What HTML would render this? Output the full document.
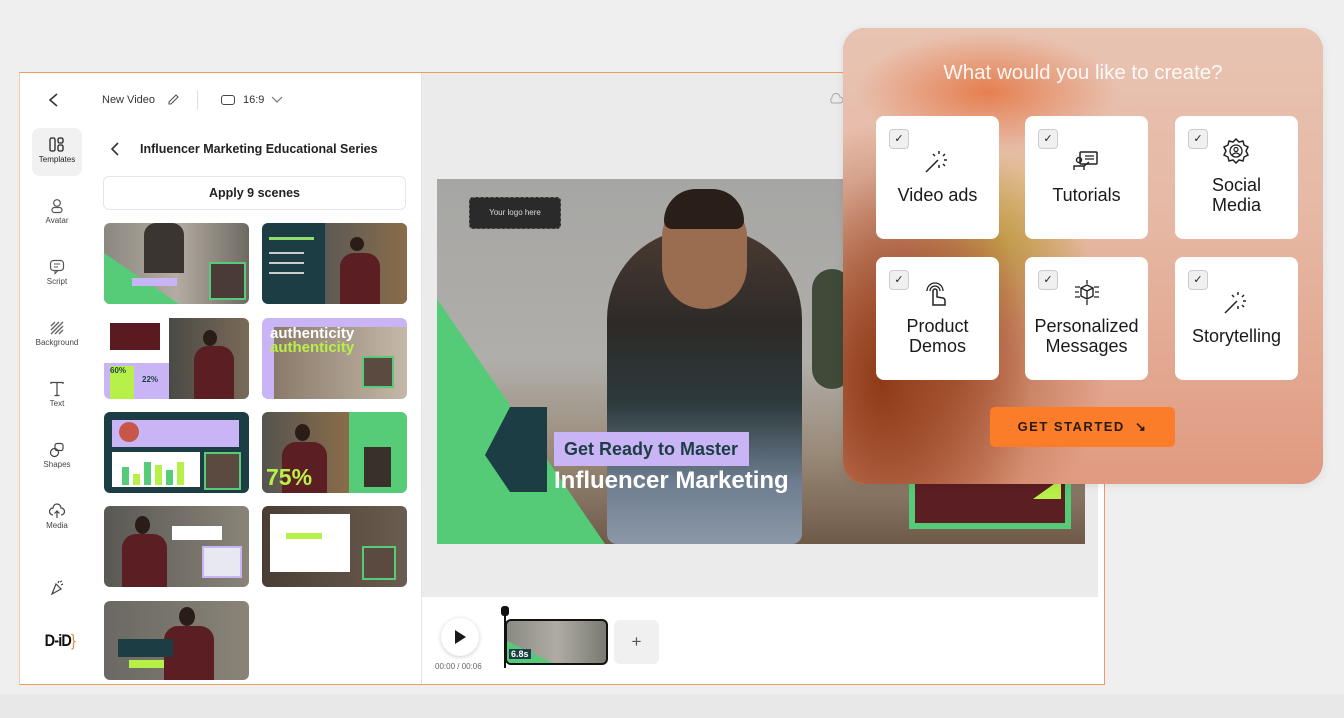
<!DOCTYPE html>
<html><head><meta charset="utf-8"><style>
*{box-sizing:border-box;margin:0;padding:0}
body{width:1344px;height:718px;background:#efefef;font-family:"Liberation Sans",sans-serif;position:relative;overflow:hidden;color:#222}
.abs{position:absolute}
.frame{left:19px;top:72px;width:1086px;height:613px;background:#fff;border:1px solid #ef9a5e;border-left-color:#f3c9a8}
.bot{left:0;top:694px;width:1344px;height:24px;background:#e8e8e8}
.rail .it{position:absolute;left:13px;width:50px;text-align:center;font-size:8px;color:#444}
.rail svg{display:block;margin:0 auto 2px}
.th{position:absolute;width:145px;height:81px;border-radius:6px;overflow:hidden}
.card{position:absolute;width:123px;height:123px;background:#fff;border-radius:8px;text-align:center;font-size:18px;color:#1a1a1a;line-height:20px}
.card .cb{position:absolute;left:13px;top:13px;width:20px;height:20px;border:1px solid #ccc;background:#f0f0f0;border-radius:4px;font-size:11px;line-height:18px;color:#222}
.card svg{position:absolute;left:48px}
</style></head><body>
<div class="abs bot"></div>
<div class="abs frame"></div>
<svg class="abs" style="left:47px;top:92px" width="14" height="16"><path d="M10 2 L3 8 L10 14" fill="none" stroke="#333" stroke-width="1.6"/></svg>
<div class="abs" style="left:102px;top:94px;font-size:11px;color:#333">New Video</div>
<svg class="abs" style="left:166px;top:93px" width="14" height="14"><path d="M3 11 L3 9 L10 2 L12 4 L5 11Z" fill="none" stroke="#555" stroke-width="1.1"/></svg>
<div class="abs" style="left:197px;top:90px;width:1px;height:20px;background:#ddd"></div>
<div class="abs" style="left:221px;top:95px;width:14px;height:10px;border:1.4px solid #444;border-radius:3px"></div>
<div class="abs" style="left:243px;top:94px;font-size:11px;color:#333">16:9</div>
<svg class="abs" style="left:271px;top:96px" width="12" height="8"><path d="M1 1 L6 6 L11 1" fill="none" stroke="#777" stroke-width="1.2"/></svg>
<div class="rail">
<div class="abs" style="left:32px;top:128px;width:50px;height:48px;background:#f1f1f1;border-radius:8px"></div>
<div class="it" style="left:32px;top:137px"><svg width="16" height="16"><rect x="1" y="1" width="5" height="13" rx="1.5" fill="none" stroke="#222" stroke-width="1.3"/><rect x="9" y="1" width="5" height="5" rx="1.5" fill="none" stroke="#222" stroke-width="1.3"/><rect x="9" y="8" width="5" height="6" rx="1.5" fill="none" stroke="#222" stroke-width="1.3"/></svg><span style="color:#222">Templates</span></div>
<div class="it" style="left:32px;top:198px"><svg width="16" height="16"><circle cx="8" cy="5" r="3.3" fill="none" stroke="#555" stroke-width="1.2"/><rect x="3" y="9.5" width="10" height="5" rx="2.5" fill="none" stroke="#555" stroke-width="1.2"/></svg>Avatar</div>
<div class="it" style="left:32px;top:259px"><svg width="16" height="16"><rect x="1.5" y="1.5" width="13" height="10" rx="3" fill="none" stroke="#555" stroke-width="1.2"/><path d="M5 5h6M5 8h4M6 11.5 L6 14.5 L9 11.5" fill="none" stroke="#555" stroke-width="1.1"/></svg>Script</div>
<div class="it" style="left:32px;top:320px"><svg width="16" height="16"><path d="M2 6 L6 2 M2 10 L10 2 M2 14 L14 2 M6 14 L14 6 M10 14 L14 10" stroke="#666" stroke-width="1.4"/></svg>Background</div>
<div class="it" style="left:32px;top:381px"><svg width="16" height="16"><path d="M2 3 V1.5 H14 V3 M8 1.5 V14.5 M5.5 14.5 H10.5" fill="none" stroke="#444" stroke-width="1.2"/></svg>Text</div>
<div class="it" style="left:32px;top:442px"><svg width="16" height="16"><rect x="6" y="1.5" width="8" height="7" rx="2" fill="none" stroke="#444" stroke-width="1.2"/><circle cx="5.5" cy="10.5" r="4" fill="none" stroke="#444" stroke-width="1.2"/></svg>Shapes</div>
<div class="it" style="left:32px;top:503px"><svg width="16" height="16"><path d="M4 12 A3.5 3.5 0 0 1 4 5 A4 4 0 0 1 12 5 A3.5 3.5 0 0 1 12 12 M8 15 V8 M5.5 10.5 L8 8 L10.5 10.5" fill="none" stroke="#444" stroke-width="1.2"/></svg>Media</div>
<div class="it" style="left:32px;top:580px"><svg width="16" height="16"><path d="M3 14 L7 4 L12 9Z M9 3 L10 1 M12 5 L14 4 M11 2 L13 1" fill="none" stroke="#444" stroke-width="1.2"/></svg></div>
<div class="abs" style="left:42px;top:631px;font-size:17px;font-weight:bold;letter-spacing:-1px;color:#111;transform:scaleX(.85)">D-iD<span style="color:#e8883a;font-weight:normal">}</span></div>
</div>
<svg class="abs" style="left:109px;top:141px" width="12" height="16"><path d="M9 2 L3 8 L9 14" fill="none" stroke="#333" stroke-width="1.6"/></svg>
<div class="abs" style="left:140px;top:142px;font-size:12.5px;font-weight:bold;color:#222">Influencer Marketing Educational Series</div>
<div class="abs" style="left:103px;top:176px;width:303px;height:34px;border:1px solid #e6e6e6;border-radius:6px;text-align:center;line-height:32px;font-size:12.5px;font-weight:bold;color:#222">Apply 9 scenes</div>
<div class="abs" style="left:421px;top:73px;width:1px;height:611px;background:#e3e3e3"></div>

<div class="th" style="left:104px;top:223px;background:linear-gradient(90deg,#8c8880,#b3aca2 50%,#6e6a62)">
 <div class="abs" style="left:0;top:30px;width:0;height:0;border-left:75px solid #56cc78;border-top:51px solid transparent"></div>
 <div class="abs" style="left:40px;top:0;width:40px;height:50px;background:#3a3530;border-radius:12px 12px 0 0"></div>
 <div class="abs" style="left:105px;top:39px;width:37px;height:38px;border:2px solid #56cc78;background:#4a3b36"></div>
 <div class="abs" style="left:28px;top:55px;width:45px;height:8px;background:#c9b5f5"></div>
</div>
<div class="th" style="left:262px;top:223px;background:#1c3d44">
 <div class="abs" style="left:63px;top:0;width:82px;height:81px;background:linear-gradient(90deg,#5c5955,#8a6d4a)"></div>
 <div class="abs" style="left:88px;top:14px;width:14px;height:14px;border-radius:50%;background:#2a1d18"></div>
 <div class="abs" style="left:78px;top:30px;width:40px;height:51px;background:#5b1e22;border-radius:14px 14px 0 0"></div>
 <div class="abs" style="left:7px;top:14px;width:45px;height:3px;background:#8fe06a"></div>
 <div class="abs" style="left:7px;top:29px;width:35px;height:2px;background:#ccc"></div>
 <div class="abs" style="left:7px;top:39px;width:35px;height:2px;background:#ccc"></div>
 <div class="abs" style="left:7px;top:49px;width:35px;height:2px;background:#ccc"></div>
</div>
<div class="th" style="left:104px;top:318px;background:#fff">
 <div class="abs" style="left:65px;top:0;width:80px;height:81px;background:linear-gradient(90deg,#4a4a46,#7a6a58)"></div>
 <div class="abs" style="left:90px;top:28px;width:40px;height:53px;background:#5b1e22;border-radius:14px 14px 0 0"></div>
 <div class="abs" style="left:99px;top:12px;width:14px;height:16px;border-radius:50%;background:#2a1d18"></div>
 <div class="abs" style="left:6px;top:5px;width:50px;height:27px;background:#5a1a20"></div>
 <div class="abs" style="left:0;top:45px;width:65px;height:36px;background:#c9b5f5"></div>
 <div class="abs" style="left:6px;top:48px;width:24px;height:33px;background:#b8f04a;font-size:8px;font-weight:bold;color:#1c3d44">60%</div>
 <div class="abs" style="left:38px;top:57px;font-size:8px;font-weight:bold;color:#1c3d44">22%</div>
</div>
<div class="th" style="left:262px;top:318px;background:#c9b5f5">
 <div class="abs" style="left:12px;top:9px;width:133px;height:72px;background:linear-gradient(90deg,#8a7a6a,#c4b8a8)"></div>
 <div class="abs" style="left:8px;top:9px;font-size:15px;font-weight:bold;color:#fff;line-height:14px">authenticity<br><span style="color:#b8f04a">authenticity</span></div>
 <div class="abs" style="left:100px;top:38px;width:32px;height:32px;border:2px solid #56cc78;background:#5b4a40"></div>
</div>
<div class="th" style="left:104px;top:412px;background:#1c3d44">
 <div class="abs" style="left:8px;top:8px;width:127px;height:27px;background:#c9b5f5"></div>
 <div class="abs" style="left:15px;top:10px;width:20px;height:20px;border-radius:50%;background:#c6574a"></div>
 <div class="abs" style="left:8px;top:40px;width:88px;height:35px;background:#fff"></div>
 <div class="abs" style="left:18px;top:55px;width:7px;height:18px;background:#56cc78"></div>
 <div class="abs" style="left:29px;top:62px;width:7px;height:11px;background:#b8f04a"></div>
 <div class="abs" style="left:40px;top:50px;width:7px;height:23px;background:#56cc78"></div>
 <div class="abs" style="left:51px;top:53px;width:7px;height:20px;background:#b8f04a"></div>
 <div class="abs" style="left:62px;top:58px;width:7px;height:15px;background:#56cc78"></div>
 <div class="abs" style="left:73px;top:50px;width:7px;height:23px;background:#b8f04a"></div>
 <div class="abs" style="left:100px;top:40px;width:37px;height:38px;border:2px solid #56cc78;background:#5b4a40"></div>
</div>
<div class="th" style="left:262px;top:412px;background:#56cc78">
 <div class="abs" style="left:0;top:0;width:87px;height:81px;background:linear-gradient(90deg,#55534f,#8a6d4a)"></div>
 <div class="abs" style="left:20px;top:30px;width:45px;height:51px;background:#5b1e22;border-radius:14px 14px 0 0"></div>
 <div class="abs" style="left:33px;top:12px;width:15px;height:17px;border-radius:50%;background:#2a1d18"></div>
 <div class="abs" style="left:4px;top:52px;font-size:23px;font-weight:bold;color:#b8f04a">75%</div>
 <div class="abs" style="left:102px;top:35px;width:27px;height:40px;background:#3a302a"></div>
</div>
<div class="th" style="left:104px;top:506px;background:linear-gradient(90deg,#5a5854,#8a8478)">
 <div class="abs" style="left:18px;top:28px;width:45px;height:53px;background:#5b1e22;border-radius:14px 14px 0 0"></div>
 <div class="abs" style="left:31px;top:10px;width:15px;height:18px;border-radius:50%;background:#2a1d18"></div>
 <div class="abs" style="left:68px;top:20px;width:50px;height:14px;background:#fff"></div>
 <div class="abs" style="left:98px;top:40px;width:40px;height:32px;background:#e8e8f0;border:2px solid #c9b5f5"></div>
</div>
<div class="th" style="left:262px;top:506px;background:linear-gradient(90deg,#4a3e34,#6a5c4e)">
 <div class="abs" style="left:8px;top:8px;width:80px;height:58px;background:#fff"></div>
 <div class="abs" style="left:24px;top:27px;width:36px;height:6px;background:#b8f04a"></div>
 <div class="abs" style="left:100px;top:40px;width:34px;height:34px;border:2px solid #56cc78;background:#5b4a40"></div>
</div>
<div class="th" style="left:104px;top:601px;height:79px;background:linear-gradient(90deg,#6a6862,#8a8478)">
 <div class="abs" style="left:60px;top:25px;width:50px;height:55px;background:#5b1e22;border-radius:14px 14px 0 0"></div>
 <div class="abs" style="left:75px;top:6px;width:16px;height:19px;border-radius:50%;background:#2a1d18"></div>
 <div class="abs" style="left:14px;top:38px;width:55px;height:18px;background:#1c3d44"></div>
 <div class="abs" style="left:25px;top:59px;width:35px;height:8px;background:#b8f04a"></div>
</div>

<div class="abs" style="left:422px;top:73px;width:676px;height:524px;background:#ebebeb"></div>
<div class="abs" style="left:1098px;top:73px;width:6px;height:611px;background:#fff"></div>
<div class="abs" style="left:437px;top:179px;width:648px;height:365px;overflow:hidden;background:linear-gradient(180deg,#a6a6a4 0%,#b0aeaa 50%,#9a8a78 75%,#6f5a48 100%)">
 <div class="abs" style="left:170px;top:50px;width:195px;height:315px;background:linear-gradient(180deg,#4a3a32 0%,#2e2a28 30%,#2c3a3c 55%,#6d7c8e 80%,#8b98a8 100%);border-radius:90px 90px 10px 10px"></div>
 <div class="abs" style="left:225px;top:20px;width:85px;height:110px;background:#9a6c50;border-radius:40px 40px 45px 45px"></div>
 <div class="abs" style="left:227px;top:10px;width:80px;height:40px;background:#2a1e18;border-radius:40px 40px 10px 10px"></div>
 <div class="abs" style="left:375px;top:90px;width:40px;height:120px;background:#3f4a38;border-radius:20px"></div>
 <svg class="abs" style="left:0;top:0" width="648" height="365"><polygon points="0,120 168,365 0,365" fill="#55cb78"/><polygon points="48,276 73,228 110,228 110,313 73,313" fill="#1c3d44"/></svg>
 <div class="abs" style="left:32px;top:18px;width:92px;height:32px;background:#2a2a2a;border:1px dashed #666;border-radius:4px;color:#ddd;font-size:8px;text-align:center;line-height:30px">Your logo here</div>
 <div class="abs" style="left:117px;top:253px;width:195px;height:34px;background:#c9b5f5;color:#1c3d44;font-weight:bold;font-size:18px;line-height:34px;padding-left:10px">Get Ready to Master</div>
 <div class="abs" style="left:117px;top:288px;color:#fff;font-weight:bold;font-size:24px">Influencer Marketing</div>
 <div class="abs" style="left:472px;top:290px;width:162px;height:60px;border:6px solid #55cb78;background:#5b1e22"></div>
 <div class="abs" style="left:596px;top:300px;width:0;height:0;border-left:28px solid transparent;border-bottom:20px solid #b8f04a"></div>
</div>
<div class="abs" style="left:441px;top:618px;width:38px;height:38px;border-radius:50%;background:#fff;box-shadow:0 1px 5px rgba(0,0,0,.2)"></div>
<div class="abs" style="left:455px;top:630px;width:0;height:0;border-left:11px solid #1a1a1a;border-top:7px solid transparent;border-bottom:7px solid transparent"></div>
<div class="abs" style="left:435px;top:662px;font-size:8px;color:#666">00:00 / 00:06</div>
<div class="abs" style="left:504px;top:606px;width:2px;height:62px;background:#111"></div>
<div class="abs" style="left:501px;top:606px;width:8px;height:10px;border-radius:3px;background:#111"></div>
<div class="abs" style="left:505px;top:619px;width:103px;height:46px;border:2px solid #111;border-radius:6px;background:linear-gradient(90deg,#8a8a82,#b0aca4,#7a7a72);overflow:hidden">
 <div class="abs" style="left:0;top:20px;width:0;height:0;border-left:50px solid #55cb78;border-top:24px solid transparent"></div>
 <div class="abs" style="left:2px;top:28px;font-size:9px;font-weight:bold;color:#fff;background:#1c3d44;padding:0 2px">6.8s</div>
</div>
<div class="abs" style="left:614px;top:620px;width:45px;height:44px;background:#f0f0f0;border-radius:6px;text-align:center;line-height:44px;font-size:17px;color:#555">+</div>
<svg class="abs" style="left:829px;top:93px" width="14" height="12"><path d="M3 10 A3 3 0 0 1 3 5 A4 4 0 0 1 11 4 A3 3 0 0 1 11 10Z" fill="none" stroke="#aaa" stroke-width="1"/></svg>

<div class="abs" style="left:843px;top:28px;width:480px;height:456px;border-radius:22px;overflow:hidden;background:#e2a288;box-shadow:0 2px 10px rgba(0,0,0,.08)">
 <div class="abs" style="left:0;top:0;width:480px;height:456px;background:radial-gradient(ellipse 150px 260px at 8% 78%,rgba(140,55,20,.95),rgba(150,65,25,0) 100%),radial-gradient(ellipse 160px 200px at 22% 70%,rgba(165,80,40,.85),rgba(165,80,40,0)),radial-gradient(ellipse 90px 100px at 33% 47%,rgba(205,190,80,.9),rgba(205,190,80,0)),radial-gradient(ellipse 130px 60px at 30% 14%,rgba(230,120,70,.9),rgba(230,120,70,0)),linear-gradient(180deg,#e8c3b2 0%,#e6b9a5 40%,#e09a80 100%)"></div>
 <div class="abs" style="left:0;top:33px;width:480px;text-align:center;color:#fff;font-size:20.5px;opacity:.92">What would you like to create?</div>
</div>
<div class="card" style="left:876px;top:116px"><div class="cb">✓</div>
<svg style="top:32px" width="26" height="26"><path d="M2 24 L14 12 M15 3 V6 M21 6 L19 8 M23 12 H20 M9 6 L11 8 M21 18 L19 16 M15 20 V17" stroke="#222" stroke-width="1.5" fill="none"/></svg>
<div style="padding-top:69px">Video ads</div></div>
<div class="card" style="left:1025px;top:116px"><div class="cb">✓</div>
<svg style="top:34px" width="26" height="22"><rect x="7" y="2" width="17" height="12" rx="1" fill="none" stroke="#222" stroke-width="1.5"/><path d="M12 6h9M12 9h9" stroke="#222" stroke-width="1.3"/><circle cx="6" cy="10" r="2.5" fill="none" stroke="#222" stroke-width="1.4"/><path d="M1 20 V16 H11 L16 12 M11 16 V20" fill="none" stroke="#222" stroke-width="1.4"/></svg>
<div style="padding-top:69px">Tutorials</div></div>
<div class="card" style="left:1175px;top:116px"><div class="cb">✓</div>
<svg style="top:22px" width="26" height="26"><path d="M13 1 L16 4 L20 3 L21 7 L25 9 L23 13 L25 17 L21 19 L20 23 L16 22 L13 25 L10 22 L6 23 L5 19 L1 17 L3 13 L1 9 L5 7 L6 3 L10 4Z" fill="none" stroke="#222" stroke-width="1.5"/><circle cx="13" cy="13" r="6" fill="none" stroke="#222" stroke-width="1.3"/><circle cx="13" cy="11.5" r="2" fill="none" stroke="#222" stroke-width="1.2"/><path d="M9 17 Q13 13 17 17" fill="none" stroke="#222" stroke-width="1.2"/></svg>
<div style="padding-top:59px">Social<br>Media</div></div>
<div class="card" style="left:876px;top:257px"><div class="cb">✓</div>
<svg style="top:22px" width="26" height="28"><path d="M9 26 V12 A2 2 0 0 1 13 12 V18 L19 19 A3 3 0 0 1 21 22 V26Z" fill="none" stroke="#222" stroke-width="1.5"/><path d="M6 12 A5 5 0 1 1 16 12 M3 12 A8 8 0 1 1 19 12" fill="none" stroke="#222" stroke-width="1.3"/></svg>
<div style="padding-top:59px">Product<br>Demos</div></div>
<div class="card" style="left:1025px;top:257px"><div class="cb">✓</div>
<svg style="top:22px" width="28" height="28"><path d="M14 6 L20 9 V17 L14 20 L8 17 V9Z M8 9 L14 12 L20 9 M14 12 V20" fill="none" stroke="#222" stroke-width="1.4"/><path d="M14 1 V5 M14 21 V26 M2 8 H7 M2 18 H7 M21 8 H26 M21 18 H26 M2 13 H6 M22 13 H26" stroke="#222" stroke-width="1.3"/></svg>
<div style="padding-top:59px">Personalized<br>Messages</div></div>
<div class="card" style="left:1175px;top:257px"><div class="cb">✓</div>
<svg style="top:32px" width="26" height="26"><path d="M2 24 L14 12 M15 3 V6 M21 6 L19 8 M23 12 H20 M9 6 L11 8 M21 18 L19 16 M15 20 V17" stroke="#222" stroke-width="1.5" fill="none"/></svg>
<div style="padding-top:69px">Storytelling</div></div>
<div class="abs" style="left:990px;top:407px;width:185px;height:40px;background:#fb7d2a;border-radius:5px;text-align:center;line-height:40px;font-size:13px;font-weight:bold;letter-spacing:1.5px;color:#2a1a10">GET STARTED &nbsp;↘</div>
</body></html>
